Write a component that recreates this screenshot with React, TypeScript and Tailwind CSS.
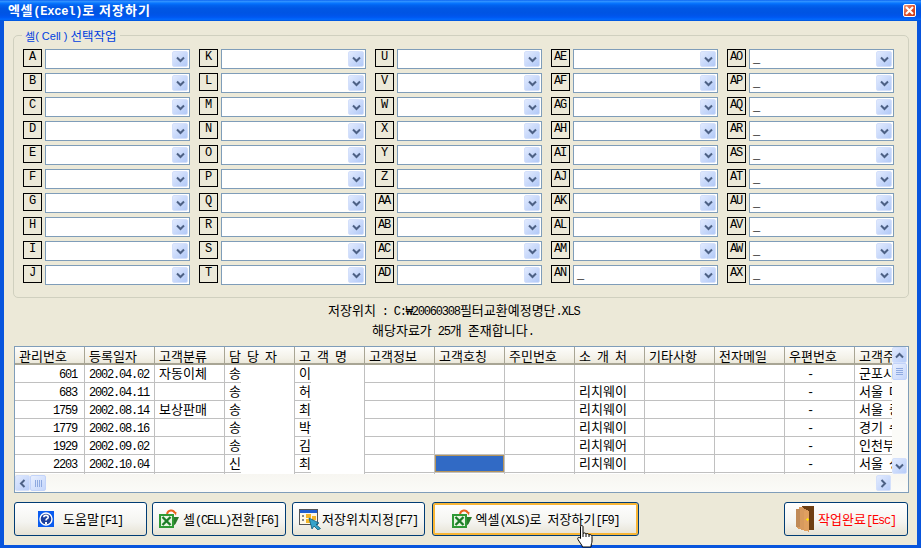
import React from "react";

function G({ t }: { t: string }) {
  const runs = t.match(/[\x20-\x7e₩]+|[^\x20-\x7e₩]+/g) || [];
  return (
    <span className="whitespace-pre">
      {runs.map((r, i) =>
        /^[\x20-\x7e₩]/.test(r) ? (
          <span key={i} className="font-['Liberation_Mono',monospace] text-[12px] tracking-[-1.2px]">{r}</span>
        ) : (
          <span key={i} className="font-['Noto_Sans_CJK_KR',sans-serif] text-[13px]">{r}</span>
        )
      )}
    </span>
  );
}

function Chevron({ rot = 0 }: { rot?: number }) {
  return (
    <svg width="9" height="7" viewBox="0 0 9 7" style={{ transform: `rotate(${rot}deg)` }}>
      <path d="M1 1.5 L4.5 5 L8 1.5" fill="none" stroke="#4d6185" strokeWidth="2" />
    </svg>
  );
}

function Combo({ label, dash }: { label: string; dash: boolean }) {
  return (
    <div className="flex h-[20px] w-[176px] items-start">
      <div className="flex h-[18px] w-[19px] items-start justify-center border border-black pr-[1px] leading-[14px] text-black">
        <span className="font-['Liberation_Mono',monospace] text-[12px] tracking-[-1.2px]">{label}</span>
      </div>
      <div className="ml-[3px] flex h-[20px] w-[145px] items-center justify-between border border-[#7f9db9] bg-white pl-[3px] pr-[1px]">
        <span className="font-['Liberation_Mono',monospace] text-[12px] leading-[17px] tracking-[-1.2px] text-black">{dash ? "_" : ""}</span>
        <div className="flex h-[16px] w-[16px] items-center justify-center rounded-[2px] border border-[#d4e0fb] bg-[linear-gradient(135deg,#e1eafe,#b2c9f7)]">
          <Chevron />
        </div>
      </div>
    </div>
  );
}

const labels = [
  "A","B","C","D","E","F","G","H","I","J",
  "K","L","M","N","O","P","Q","R","S","T",
  "U","V","W","X","Y","Z","AA","AB","AC","AD",
  "AE","AF","AG","AH","AI","AJ","AK","AL","AM","AN",
  "AO","AP","AQ","AR","AS","AT","AU","AV","AW","AX",
];

const headers = ["관리번호","등록일자","고객분류","담 당 자","고 객 명","고객정보","고객호칭","주민번호","소 개 처","기타사항","전자메일","우편번호","고객주소"];

const rows = [
  ["601","2002.04.02","자동이체","송","이","","","","","","","-","군포시"],
  ["683","2002.04.11","","송","허","","","","리치웨이","","","-","서울 대"],
  ["1759","2002.08.14","보상판매","송","최","","","","리치웨이","","","-","서울 중"],
  ["1779","2002.08.16","","송","박","","","","리치웨이","","","-","경기 수"],
  ["1929","2002.09.02","","송","김","","","","리치웨어","","","-","인천부"],
  ["2203","2002.10.04","","신","최","","","","리치웨이","","","-","서울 성"],
  ["","","","","","","","","","","","",""],
];

function Cell({ v, c, r }: { v: string; c: number; r: number }) {
  const masked = c === 3 || c === 4;
  const selected = r === 5 && c === 6;
  const first = c === 0;
  return (
    <div className={`flex h-[18px] w-[70px] shrink-0 flex-col border-r border-[#c0c0c0] ${c === 12 ? "border-r-0" : ""}`}>
      {selected ? (
        <div className="h-[17px] border border-[#b4945c] bg-[#316ac5]" />
      ) : (
        <div
          className={`h-[17px] leading-[15px] text-black ${first ? "pr-[7px] text-right" : c === 11 ? "pl-[22px]" : "pl-[4px]"}`}
        >
          <G t={v} />
        </div>
      )}
      <div className={`h-px bg-[#c0c0c0] ${masked ? "w-[16px]" : "w-full"}`} />
    </div>
  );
}

function ScrollBtn({ rot }: { rot: number }) {
  return (
    <div className="flex h-[16px] w-[15px] shrink-0 items-center justify-center rounded-[2px] border border-[#d4e0fb] bg-[linear-gradient(135deg,#e1eafe,#b8cdf9)]">
      <Chevron rot={rot} />
    </div>
  );
}

function Grip({ vertical }: { vertical: boolean }) {
  return (
    <div className={`flex shrink-0 items-center justify-center rounded-[2px] border border-[#c2d3fa] bg-[linear-gradient(135deg,#e8effe,#c5d6fb)] ${vertical ? "h-[17px] w-[15px] flex-col gap-[1px]" : "h-[16px] w-[16px] flex-row gap-[1px]"}`}>
      {[0, 1, 2, 3].map((i) => (
        <div key={i} className={vertical ? "h-px w-[7px] bg-[#8faae0]" : "h-[7px] w-px bg-[#8faae0]"} />
      ))}
    </div>
  );
}

function HelpIcon() {
  return (
    <svg width="16" height="16" viewBox="0 0 16 16" shapeRendering="crispEdges">
      <rect width="16" height="16" fill="#0a5cf0" />
      <circle cx="8" cy="8" r="6" fill="#1c3f9c" stroke="#fff" strokeWidth="1.4" shapeRendering="auto" />
      <path d="M5.8 6.2 C5.8 3.8 10.2 3.8 10.2 6.2 C10.2 7.8 8 7.6 8 9.4" fill="none" stroke="#fff" strokeWidth="1.6" shapeRendering="auto" />
      <rect x="7" y="10.6" width="2" height="2" fill="#fff" />
    </svg>
  );
}

function ExcelIcon() {
  return (
    <svg width="20" height="20" viewBox="0 0 20 20">
      <path d="M8 5 C9 1 14 0 16 4" fill="none" stroke="#e8641e" strokeWidth="2" />
      <path d="M14.5 3 L17.5 3 L17 6.5 Z" fill="#e8641e" />
      <path d="M13 8 H20 L16.5 15 L13 18 Z" fill="#2a7a2a" />
      <rect x="0" y="5" width="15" height="14" fill="#2f9a35" />
      <rect x="2" y="7" width="11" height="10" fill="#e9f5e2" />
      <path d="M3.5 8 L11.5 16 M11.5 8 L3.5 16" stroke="#1d7d27" strokeWidth="2.4" />
    </svg>
  );
}

function LocationIcon() {
  return (
    <svg width="22" height="21" viewBox="0 0 22 21">
      <rect x="0.5" y="0.5" width="18" height="15" fill="#fdf8e8" stroke="#555" />
      <rect x="1" y="1" width="17" height="3" fill="#1f5fd0" />
      <rect x="3" y="6" width="2" height="2" fill="#888" />
      <rect x="3" y="10" width="2" height="2" fill="#888" />
      <rect x="7" y="5" width="5" height="4" fill="#f3b52a" />
      <rect x="7" y="10" width="5" height="4" fill="#f3b52a" />
      <rect x="13" y="7" width="4" height="4" fill="#f3b52a" />
      <path d="M10 9 L20 14 L17 15.5 L21.5 19.5 L19 21 L15 17 L13 20 Z" fill="#35a3c9" stroke="#0d5a7a" strokeWidth="0.8" />
    </svg>
  );
}

function DoorIcon() {
  return (
    <svg width="18" height="26" viewBox="0 0 18 26" shapeRendering="crispEdges">
      <rect x="6" y="0" width="12" height="24" fill="#6e3f12" />
      <path d="M0 3 L3 3 L3 1 L7 1 L7 2 L13 5 L13 26 L7 24 L3 23 L0 21 Z" fill="#d89a5e" />
      <rect x="0" y="3" width="4" height="18" fill="#c08a58" />
      <rect x="8" y="5" width="5" height="20" fill="#e0a060" />
      <rect x="10" y="13" width="3" height="1" fill="#ffe600" />
      <rect x="11" y="12" width="1" height="3" fill="#ffe600" />
    </svg>
  );
}

function Btn({ w, ml, focus, red, icon, text, gap }: { w: string; ml?: string; focus?: boolean; red?: boolean; icon: React.ReactNode; text: string; gap: string }) {
  return (
    <div className={`${w} ${ml ?? ""} flex h-[34px] shrink-0 items-center justify-center rounded-[3px] border border-[#003c74] bg-[linear-gradient(180deg,#ffffff,#f4f4f0_60%,#e6e2d4)] ${gap} ${focus ? "shadow-[inset_0_0_0_2px_#f8b636]" : ""} ${red ? "text-[#ff0000]" : "text-black"}`}>
      {icon}
      <span className="mb-[3px]">
        <G t={text} />
      </span>
    </div>
  );
}

export default function App() {
  return (
    <div className="relative flex h-[548px] w-[921px] flex-col overflow-hidden bg-[#0855dd]">
      {/* Title bar */}
      <div className="flex h-[21px] shrink-0 items-center justify-between bg-[linear-gradient(180deg,#0058ee_0%,#3593ff_5%,#288eff_9%,#127dff_13%,#036ffc_18%,#0262ee_26%,#0057e5_40%,#0054e3_60%,#0055eb_75%,#005bf5_85%,#026afe_92%,#0052d6_100%)] pl-[8px] pr-[5px] text-white">
        <span className="whitespace-pre font-bold leading-[21px]">
          <span className="font-['Noto_Sans_CJK_KR',sans-serif] text-[13px] tracking-[0.6px]">엑셀</span>
          <span className="font-['Liberation_Mono',monospace] text-[12px] tracking-[-0.2px]">(Excel)</span>
          <span className="font-['Noto_Sans_CJK_KR',sans-serif] text-[13px] tracking-[1px]">로 저장하기</span>
        </span>
        <div className="flex h-[13px] w-[13px] items-center justify-center rounded-[2px] border border-white bg-[linear-gradient(135deg,#f0a080,#e0502c_50%,#c83a18)]">
          <svg width="9" height="9" viewBox="0 0 9 9">
            <path d="M1 1 L8 8 M8 1 L1 8" stroke="#fff" strokeWidth="2.2" />
          </svg>
        </div>
      </div>

      {/* Body */}
      <div className="mx-[4px] mb-[3px] flex min-h-0 flex-1 flex-col bg-[#ece9d8] pt-[14px]">
        <div className="relative ml-[9px] h-[263px] w-[896px] shrink-0 rounded-[5px] border border-[#d0d0bf] pl-[9px] pt-[13px]">
          <div className="absolute left-[8px] top-[-7px] flex h-[14px] items-center whitespace-pre bg-[#ece9d8] px-[3px] text-[#0040e0]">
            <span className="font-['Noto_Sans_CJK_KR',sans-serif] text-[11px]">셀</span>
            <span className="font-['Liberation_Sans',sans-serif] text-[11px]">( Cell ) </span>
            <span className="font-['Noto_Sans_CJK_KR',sans-serif] text-[12.5px]">선택작업</span>
          </div>
          <div className="grid grid-flow-col grid-rows-10 justify-start gap-y-[4px]">
            {labels.map((l, i) => (
              <Combo key={l} label={l} dash={i >= 39} />
            ))}
          </div>
        </div>

        <div className="mt-[2px] h-[20px] shrink-0 pl-[324px] leading-[18px] text-black">
          <G t="저장위치 : C:₩20060308필터교환예정명단.XLS" />
        </div>
        <div className="h-[20px] shrink-0 pl-[368px] leading-[18px] text-black">
          <G t="해당자료가 25개 존재합니다." />
        </div>

        {/* Table */}
        <div className="ml-[10px] mt-[6px] flex h-[147px] w-[895px] shrink-0 flex-col border border-[#7f9db9] bg-white">
          <div className="flex h-[127px] shrink-0">
            <div className="w-[877px] shrink-0 overflow-hidden">
              <div className="flex h-[18px] w-[920px] border-b-2 border-[#a8a594] bg-[linear-gradient(180deg,#fdfdfb,#f3f1e8_70%,#ebe8da)]">
                {headers.map((h) => (
                  <div key={h} className="h-[16px] w-[70px] shrink-0 border-r border-[#a8a594] pl-[4px] leading-[16px] text-black">
                    <G t={h} />
                  </div>
                ))}
              </div>
              <div className="w-[920px]">
                {rows.map((row, r) => (
                  <div key={r} className="flex">
                    {row.map((v, c) => (
                      <Cell key={c} v={v} c={c} r={r} />
                    ))}
                  </div>
                ))}
              </div>
            </div>
            <div className="flex w-[16px] shrink-0 flex-col bg-[#fbfbf8]">
              <ScrollBtn rot={180} />
              <Grip vertical />
              <div className="flex-1" />
              <ScrollBtn rot={0} />
            </div>
          </div>
          <div className="flex h-[18px] shrink-0 items-center bg-[linear-gradient(180deg,#f7f6f1,#fbfbf8)]">
            <ScrollBtn rot={90} />
            <Grip vertical={false} />
            <div className="flex-1" />
            <div className="mr-[17px]">
              <ScrollBtn rot={-90} />
            </div>
          </div>
        </div>

        {/* Buttons */}
        <div className="ml-[10px] mt-[9px] flex shrink-0">
          <Btn w="w-[133px]" gap="gap-[9px]" icon={<HelpIcon />} text="도움말[F1]" />
          <Btn w="w-[134px]" ml="ml-[5px]" gap="gap-[4px]" icon={<ExcelIcon />} text="셀(CELL)전환[F6]" />
          <Btn w="w-[133px]" ml="ml-[6px]" gap="gap-[1px]" icon={<LocationIcon />} text="저장위치지정[F7]" />
          <Btn w="w-[207px]" ml="ml-[7px]" gap="gap-[4px]" focus icon={<ExcelIcon />} text="엑셀(XLS)로 저장하기[F9]" />
          <Btn w="w-[124px]" ml="ml-[145px]" gap="gap-[4px]" red icon={<DoorIcon />} text="작업완료[Esc]" />
        </div>
      </div>

      {/* Mouse cursor */}
      <svg className="absolute left-[577px] top-[525px]" width="17" height="23" viewBox="0 0 17 23">
        <path
          d="M3.5 1.5 C3.5 0.3 6 0.3 6 1.5 V8.5 C7 7.6 8.6 7.8 9 9 C10 8.2 11.6 8.5 12 9.8 C13 9.3 15 9.8 15 11.5 V16 C15 18 14 19 14 22 H5.5 C5 20 3 18 1 14.5 C0 12.5 2 11.5 3.5 13.5 Z"
          fill="#fff"
          stroke="#000"
          strokeWidth="1"
        />
        <path d="M6 8.5 V12 M9 9 V12 M12 9.8 V12" stroke="#000" strokeWidth="1" fill="none" />
      </svg>
    </div>
  );
}
